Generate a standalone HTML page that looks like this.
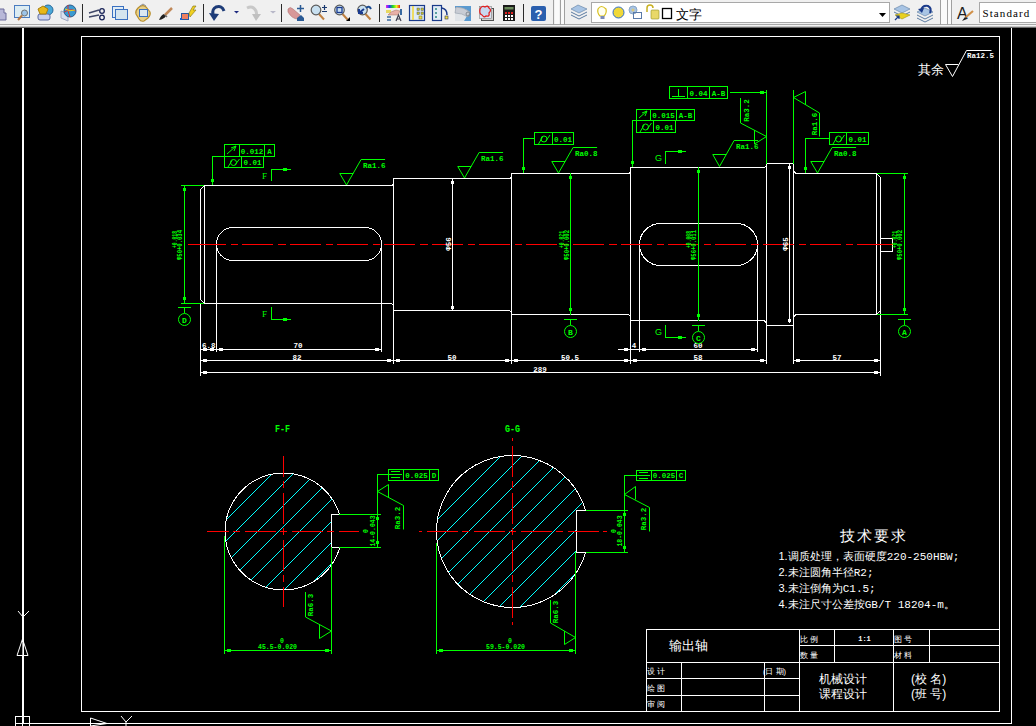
<!DOCTYPE html>
<html><head><meta charset="utf-8"><style>
html,body{margin:0;padding:0;background:#000;width:1036px;height:726px;overflow:hidden}
svg{position:absolute;left:0;top:0}

</style></head><body>
<svg width="1036" height="726" viewBox="0 0 1036 726" shape-rendering="crispEdges">
<defs><linearGradient id="rainbow"><stop offset="0" stop-color="#f020f0"/><stop offset="0.25" stop-color="#2040f0"/><stop offset="0.5" stop-color="#20e020"/><stop offset="0.75" stop-color="#f0f020"/><stop offset="1" stop-color="#f02020"/></linearGradient></defs>
<rect x="0" y="0" width="1036" height="726" fill="#000"/>
<g stroke-width="1" fill="none">
<path d="M22.5 28V724" stroke="#ffffff"/>
<path d="M23.5 28V724" stroke="#ffffff"/>
<path d="M23 723.5H1012" stroke="#ffffff"/>
<path d="M1011.5 28V724" stroke="#ffffff"/>
<rect x="81.5" y="36.5" width="918" height="675" fill="none" stroke="#ffffff"/>
<path d="M204.5 185.5 L200.5 189.5 V299.5 L204.5 303.5" stroke="#ffffff" fill="none"/>
<path d="M204.5 185V304" stroke="#ffffff"/>
<path d="M204.5 185.5 H390.5 Q393.5 185.5 393.5 182.5" stroke="#ffffff" fill="none"/>
<path d="M204.5 303.5 H390.5 Q393.5 303.5 393.5 306.5" stroke="#ffffff" fill="none"/>
<path d="M393.5 178V311" stroke="#ffffff"/>
<path d="M393.5 178.5 H508.5 Q511.5 178.5 511.5 175.5" stroke="#ffffff" fill="none"/>
<path d="M393.5 310.5 H508.5 Q511.5 310.5 511.5 313.5" stroke="#ffffff" fill="none"/>
<path d="M511.5 173V315" stroke="#ffffff"/>
<path d="M511.5 173.5 H627.5 Q630.5 173.5 630.5 170.5" stroke="#ffffff" fill="none"/>
<path d="M511.5 314.5 H627.5 Q630.5 314.5 630.5 317.5" stroke="#ffffff" fill="none"/>
<path d="M630.5 167V321" stroke="#ffffff"/>
<path d="M630.5 167.5 H762.5 Q766.5 167.5 766.5 163.5" stroke="#ffffff" fill="none"/>
<path d="M630.5 320.5 H762.5 Q766.5 320.5 766.5 324.5" stroke="#ffffff" fill="none"/>
<path d="M766.5 163V326" stroke="#ffffff"/>
<path d="M766 163.5H794" stroke="#ffffff"/>
<path d="M766 325.5H794" stroke="#ffffff"/>
<path d="M793.5 163V326" stroke="#ffffff"/>
<path d="M793.5 168.5 Q793.5 173.5 797.5 173.5 H876.5 L880.5 177.5 V310.5 L876.5 314.5 H797.5 Q793.5 314.5 793.5 319.5" stroke="#ffffff" fill="none"/>
<path d="M876.5 173V315" stroke="#ffffff"/>
<path d="M880.5 238.5 H892.5 V251.5 H880.5" stroke="#ffffff" fill="none"/>
<rect x="216.5" y="227.5" width="165" height="33" rx="16.5" fill="none" stroke="#fff"/>
<rect x="639.5" y="223.5" width="118" height="42" rx="21" fill="none" stroke="#fff"/>
<path d="M188 244.5H226M857 244.5H893" stroke="#ff0000"/>
<path d="M226 244.5H857" stroke="#ff0000" stroke-dasharray="31 5 7.3 4" stroke-dashoffset="31"/>
<path d="M200.5 303V376" stroke="#ffffff"/>
<path d="M216.5 245V352" stroke="#ffffff"/>
<path d="M381.5 245V352" stroke="#ffffff"/>
<path d="M393.5 310V364" stroke="#ffffff"/>
<path d="M511.5 314V364" stroke="#ffffff"/>
<path d="M630.5 320V364" stroke="#ffffff"/>
<path d="M639.5 245V352" stroke="#ffffff"/>
<path d="M757.5 245V352" stroke="#ffffff"/>
<path d="M766.5 325V364" stroke="#ffffff"/>
<path d="M793.5 325V364" stroke="#ffffff"/>
<path d="M880.5 310V376" stroke="#ffffff"/>
<path d="M200 349.5H382" stroke="#ffffff"/>
<rect x="203" y="348" width="4" height="3" fill="#ffffff"/>
<rect x="210" y="348" width="4" height="3" fill="#ffffff"/>
<rect x="219" y="348" width="4" height="3" fill="#ffffff"/>
<rect x="375" y="348" width="4" height="3" fill="#ffffff"/>
<path d="M618 349.5H758" stroke="#ffffff"/>
<rect x="624" y="348" width="4" height="3" fill="#ffffff"/>
<rect x="642" y="348" width="4" height="3" fill="#ffffff"/>
<rect x="751" y="348" width="4" height="3" fill="#ffffff"/>
<path d="M200 360.5H767" stroke="#ffffff"/>
<rect x="203" y="359" width="4" height="3" fill="#ffffff"/>
<rect x="387" y="359" width="4" height="3" fill="#ffffff"/>
<rect x="396" y="359" width="4" height="3" fill="#ffffff"/>
<rect x="505" y="359" width="4" height="3" fill="#ffffff"/>
<rect x="514" y="359" width="4" height="3" fill="#ffffff"/>
<rect x="624" y="359" width="4" height="3" fill="#ffffff"/>
<rect x="633" y="359" width="4" height="3" fill="#ffffff"/>
<rect x="760" y="359" width="4" height="3" fill="#ffffff"/>
<path d="M793 360.5H881" stroke="#ffffff"/>
<rect x="796" y="359" width="4" height="3" fill="#ffffff"/>
<rect x="874" y="359" width="4" height="3" fill="#ffffff"/>
<path d="M200 372.5H881" stroke="#ffffff"/>
<rect x="203" y="371" width="4" height="3" fill="#ffffff"/>
<rect x="874" y="371" width="4" height="3" fill="#ffffff"/>
<text x="202" y="348" fill="#ffffff" font-size="7.5" text-anchor="start" font-family="Liberation Mono, sans-serif"  font-weight="bold">6.8</text>
<text x="298" y="348" fill="#ffffff" font-size="7.5" text-anchor="middle" font-family="Liberation Mono, sans-serif"  font-weight="bold">70</text>
<text x="297" y="360" fill="#ffffff" font-size="7.5" text-anchor="middle" font-family="Liberation Mono, sans-serif"  font-weight="bold">82</text>
<text x="452" y="360" fill="#ffffff" font-size="7.5" text-anchor="middle" font-family="Liberation Mono, sans-serif"  font-weight="bold">50</text>
<text x="570" y="360" fill="#ffffff" font-size="7.5" text-anchor="middle" font-family="Liberation Mono, sans-serif"  font-weight="bold">50.5</text>
<text x="634" y="348" fill="#ffffff" font-size="7.5" text-anchor="middle" font-family="Liberation Mono, sans-serif"  font-weight="bold">4</text>
<text x="698" y="348" fill="#ffffff" font-size="7.5" text-anchor="middle" font-family="Liberation Mono, sans-serif"  font-weight="bold">60</text>
<text x="698" y="360" fill="#ffffff" font-size="7.5" text-anchor="middle" font-family="Liberation Mono, sans-serif"  font-weight="bold">58</text>
<text x="837" y="360" fill="#ffffff" font-size="7.5" text-anchor="middle" font-family="Liberation Mono, sans-serif"  font-weight="bold">57</text>
<text x="540" y="372" fill="#ffffff" font-size="7.5" text-anchor="middle" font-family="Liberation Mono, sans-serif"  font-weight="bold">289</text>
<path d="M452.5 178V311" stroke="#ffffff"/>
<rect x="451" y="181" width="3" height="3" fill="#ffffff"/>
<rect x="451" y="306" width="3" height="3" fill="#ffffff"/>
<text x="451" y="244" fill="#ffffff" font-size="7.5" text-anchor="middle" font-family="Liberation Mono, sans-serif" transform="rotate(-90 451 244)"  font-weight="bold">&#934;56</text>
<path d="M789.5 163V323" stroke="#ffffff"/>
<rect x="788" y="166" width="3" height="3" fill="#ffffff"/>
<rect x="788" y="319" width="3" height="3" fill="#ffffff"/>
<text x="788" y="244" fill="#ffffff" font-size="7.5" text-anchor="middle" font-family="Liberation Mono, sans-serif" transform="rotate(-90 788 244)"  font-weight="bold">&#934;65</text>
<path d="M184.5 185V304" stroke="#00ff00"/>
<rect x="183" y="188" width="3" height="3" fill="#00ff00"/>
<rect x="183" y="297" width="3" height="3" fill="#00ff00"/>
<path d="M181 185.5H204" stroke="#00ff00"/>
<path d="M181 303.5H204" stroke="#00ff00"/>
<path d="M570.5 173V315" stroke="#00ff00"/>
<rect x="569" y="176" width="3" height="3" fill="#00ff00"/>
<rect x="569" y="308" width="3" height="3" fill="#00ff00"/>
<path d="M698.5 167V321" stroke="#00ff00"/>
<rect x="697" y="170" width="3" height="3" fill="#00ff00"/>
<rect x="697" y="314" width="3" height="3" fill="#00ff00"/>
<path d="M904.5 173V315" stroke="#00ff00"/>
<rect x="903" y="176" width="3" height="3" fill="#00ff00"/>
<rect x="903" y="308" width="3" height="3" fill="#00ff00"/>
<path d="M877 173.5H908" stroke="#00ff00"/>
<path d="M877 314.5H908" stroke="#00ff00"/>
<text x="177" y="248" fill="#00ff00" font-size="6.5" text-anchor="start" font-family="Liberation Mono, sans-serif" transform="rotate(-90 177 248)" textLength="17" lengthAdjust="spacingAndGlyphs" font-weight="bold">+0.018</text>
<text x="182" y="260" fill="#00ff00" font-size="6.5" text-anchor="start" font-family="Liberation Mono, sans-serif" transform="rotate(-90 182 260)" textLength="30" lengthAdjust="spacingAndGlyphs" font-weight="bold">&#934;50+0.034</text>
<text x="564" y="248" fill="#00ff00" font-size="6.5" text-anchor="start" font-family="Liberation Mono, sans-serif" transform="rotate(-90 564 248)" textLength="17" lengthAdjust="spacingAndGlyphs" font-weight="bold">+0.021</text>
<text x="569" y="260" fill="#00ff00" font-size="6.5" text-anchor="start" font-family="Liberation Mono, sans-serif" transform="rotate(-90 569 260)" textLength="30" lengthAdjust="spacingAndGlyphs" font-weight="bold">&#934;50+0.002</text>
<text x="691" y="248" fill="#00ff00" font-size="6.5" text-anchor="start" font-family="Liberation Mono, sans-serif" transform="rotate(-90 691 248)" textLength="17" lengthAdjust="spacingAndGlyphs" font-weight="bold">+0.008</text>
<text x="696" y="260" fill="#00ff00" font-size="6.5" text-anchor="start" font-family="Liberation Mono, sans-serif" transform="rotate(-90 696 260)" textLength="30" lengthAdjust="spacingAndGlyphs" font-weight="bold">&#934;56+0.011</text>
<text x="897" y="248" fill="#00ff00" font-size="6.5" text-anchor="start" font-family="Liberation Mono, sans-serif" transform="rotate(-90 897 248)" textLength="17" lengthAdjust="spacingAndGlyphs" font-weight="bold">+0.021</text>
<text x="902" y="260" fill="#00ff00" font-size="6.5" text-anchor="start" font-family="Liberation Mono, sans-serif" transform="rotate(-90 902 260)" textLength="30" lengthAdjust="spacingAndGlyphs" font-weight="bold">&#934;50+0.002</text>
<path d="M178 307.5H191" stroke="#00ff00"/>
<path d="M184.5 307V313" stroke="#00ff00"/>
<circle cx="184.5" cy="319.5" r="6" stroke="#00ff00" fill="none" shape-rendering="auto"/>
<text x="184.5" y="322.5" fill="#00ff00" font-size="8" text-anchor="middle" font-family="Liberation Mono, sans-serif"  font-weight="bold">D</text>
<path d="M564 319.5H577" stroke="#00ff00"/>
<path d="M570.5 319V325" stroke="#00ff00"/>
<circle cx="570.5" cy="331.5" r="6" stroke="#00ff00" fill="none" shape-rendering="auto"/>
<text x="570.5" y="334.5" fill="#00ff00" font-size="8" text-anchor="middle" font-family="Liberation Mono, sans-serif"  font-weight="bold">B</text>
<path d="M692 325.5H705" stroke="#00ff00"/>
<path d="M698.5 325V331" stroke="#00ff00"/>
<circle cx="698.5" cy="337.5" r="6" stroke="#00ff00" fill="none" shape-rendering="auto"/>
<text x="698.5" y="340.5" fill="#00ff00" font-size="8" text-anchor="middle" font-family="Liberation Mono, sans-serif"  font-weight="bold">C</text>
<path d="M898 319.5H911" stroke="#00ff00"/>
<path d="M904.5 319V325" stroke="#00ff00"/>
<circle cx="904.5" cy="331.5" r="6" stroke="#00ff00" fill="none" shape-rendering="auto"/>
<text x="904.5" y="334.5" fill="#00ff00" font-size="8" text-anchor="middle" font-family="Liberation Mono, sans-serif"  font-weight="bold">A</text>
<path d="M224 144.5H275" stroke="#00ff00"/>
<path d="M224 156.5H275" stroke="#00ff00"/>
<path d="M224.5 144V157" stroke="#00ff00"/>
<path d="M274.5 144V157" stroke="#00ff00"/>
<path d="M239.5 144V157" stroke="#00ff00"/>
<path d="M264.5 144V157" stroke="#00ff00"/>
<path d="M224 156.5H264" stroke="#00ff00"/>
<path d="M224 167.5H264" stroke="#00ff00"/>
<path d="M224.5 156V168" stroke="#00ff00"/>
<path d="M263.5 156V168" stroke="#00ff00"/>
<path d="M241.5 156V168" stroke="#00ff00"/>
<path d="M227 154L236 146" stroke="#00ff00" shape-rendering="auto"/>
<path d="M231 148L236 146L234 151" stroke="#00ff00" fill="none" shape-rendering="auto"/>
<text x="252.0" y="154" fill="#00ff00" font-size="7.5" text-anchor="middle" font-family="Liberation Mono, sans-serif"  font-weight="bold">0.012</text>
<text x="269.5" y="154" fill="#00ff00" font-size="7.5" text-anchor="middle" font-family="Liberation Mono, sans-serif"  font-weight="bold">A</text>
<circle cx="233.5" cy="162.5" r="3" stroke="#00ff00" fill="none" shape-rendering="auto"/>
<path d="M228.0 167L232.0 160.5M235.0 165.0L239.5 159" stroke="#00ff00" shape-rendering="auto"/>
<text x="252.5" y="165" fill="#00ff00" font-size="7.5" text-anchor="middle" font-family="Liberation Mono, sans-serif"  font-weight="bold">0.01</text>
<path d="M212 156.5H225" stroke="#00ff00"/>
<path d="M212.5 156V185" stroke="#00ff00"/>
<rect x="211" y="179" width="3" height="3" fill="#00ff00"/>
<path d="M534 132.5H574" stroke="#00ff00"/>
<path d="M534 144.5H574" stroke="#00ff00"/>
<path d="M534.5 132V145" stroke="#00ff00"/>
<path d="M573.5 132V145" stroke="#00ff00"/>
<path d="M552.5 132V145" stroke="#00ff00"/>
<circle cx="544.0" cy="139.0" r="3" stroke="#00ff00" fill="none" shape-rendering="auto"/>
<path d="M538.5 144L542.5 137.0M545.5 141.5L550.0 135" stroke="#00ff00" shape-rendering="auto"/>
<text x="563.0" y="142" fill="#00ff00" font-size="7.5" text-anchor="middle" font-family="Liberation Mono, sans-serif"  font-weight="bold">0.01</text>
<path d="M523 138.5H535" stroke="#00ff00"/>
<path d="M523.5 138V173" stroke="#00ff00"/>
<rect x="522" y="167" width="3" height="3" fill="#00ff00"/>
<path d="M669 86.5H728" stroke="#00ff00"/>
<path d="M669 98.5H728" stroke="#00ff00"/>
<path d="M669.5 86V99" stroke="#00ff00"/>
<path d="M727.5 86V99" stroke="#00ff00"/>
<path d="M687.5 86V99" stroke="#00ff00"/>
<path d="M709.5 86V99" stroke="#00ff00"/>
<path d="M672 96.5H685" stroke="#00ff00"/>
<path d="M678.5 89V97" stroke="#00ff00"/>
<text x="698.5" y="96" fill="#00ff00" font-size="7.5" text-anchor="middle" font-family="Liberation Mono, sans-serif"  font-weight="bold">0.04</text>
<text x="718.5" y="96" fill="#00ff00" font-size="7.5" text-anchor="middle" font-family="Liberation Mono, sans-serif"  font-weight="bold">A-B</text>
<path d="M730 92.5H767" stroke="#00ff00"/>
<rect x="760" y="91" width="4" height="3" fill="#00ff00"/>
<path d="M636 109.5H695" stroke="#00ff00"/>
<path d="M636 120.5H695" stroke="#00ff00"/>
<path d="M636.5 109V121" stroke="#00ff00"/>
<path d="M694.5 109V121" stroke="#00ff00"/>
<path d="M650.5 109V121" stroke="#00ff00"/>
<path d="M676.5 109V121" stroke="#00ff00"/>
<path d="M636 120.5H676" stroke="#00ff00"/>
<path d="M636 132.5H676" stroke="#00ff00"/>
<path d="M636.5 120V133" stroke="#00ff00"/>
<path d="M675.5 120V133" stroke="#00ff00"/>
<path d="M653.5 120V133" stroke="#00ff00"/>
<path d="M639 118L647 111" stroke="#00ff00" shape-rendering="auto"/>
<path d="M642 113L647 111L645 116" stroke="#00ff00" fill="none" shape-rendering="auto"/>
<text x="663.5" y="118" fill="#00ff00" font-size="7.5" text-anchor="middle" font-family="Liberation Mono, sans-serif"  font-weight="bold">0.015</text>
<text x="685.5" y="118" fill="#00ff00" font-size="7.5" text-anchor="middle" font-family="Liberation Mono, sans-serif"  font-weight="bold">A-B</text>
<circle cx="645.5" cy="127.0" r="3" stroke="#00ff00" fill="none" shape-rendering="auto"/>
<path d="M640.0 132L644.0 125.0M647.0 129.5L651.5 123" stroke="#00ff00" shape-rendering="auto"/>
<text x="664.5" y="130" fill="#00ff00" font-size="7.5" text-anchor="middle" font-family="Liberation Mono, sans-serif"  font-weight="bold">0.01</text>
<path d="M632 120.5H637" stroke="#00ff00"/>
<path d="M632.5 120V167" stroke="#00ff00"/>
<rect x="631" y="161" width="3" height="3" fill="#00ff00"/>
<path d="M829 132.5H869" stroke="#00ff00"/>
<path d="M829 144.5H869" stroke="#00ff00"/>
<path d="M829.5 132V145" stroke="#00ff00"/>
<path d="M868.5 132V145" stroke="#00ff00"/>
<path d="M846.5 132V145" stroke="#00ff00"/>
<circle cx="838.5" cy="139.0" r="3" stroke="#00ff00" fill="none" shape-rendering="auto"/>
<path d="M833.0 144L837.0 137.0M840.0 141.5L844.5 135" stroke="#00ff00" shape-rendering="auto"/>
<text x="857.5" y="142" fill="#00ff00" font-size="7.5" text-anchor="middle" font-family="Liberation Mono, sans-serif"  font-weight="bold">0.01</text>
<path d="M805 138.5H830" stroke="#00ff00"/>
<path d="M805.5 138V173" stroke="#00ff00"/>
<rect x="804" y="167" width="3" height="3" fill="#00ff00"/>
<path d="M766.5 90V164" stroke="#00ff00"/>
<path d="M793.5 90V164" stroke="#00ff00"/>
<path d="M339.75 173.5H353.25M339.75 173.5L346.5 185L361.09 159.5H385.09" stroke="#00ff00" fill="none" shape-rendering="auto"/>
<text x="363.09" y="168.0" fill="#00ff00" font-size="7.5" text-anchor="start" font-family="Liberation Mono, sans-serif"  font-weight="bold">Ra1.6</text>
<path d="M457.75 166.5H471.25M457.75 166.5L464.5 178L479.09 152.5H503.09" stroke="#00ff00" fill="none" shape-rendering="auto"/>
<text x="481.09" y="161.0" fill="#00ff00" font-size="7.5" text-anchor="start" font-family="Liberation Mono, sans-serif"  font-weight="bold">Ra1.6</text>
<path d="M551.75 161.5H565.25M551.75 161.5L558.5 173L573.09 147.5H597.09" stroke="#00ff00" fill="none" shape-rendering="auto"/>
<text x="575.09" y="156.0" fill="#00ff00" font-size="7.5" text-anchor="start" font-family="Liberation Mono, sans-serif"  font-weight="bold">Ra0.8</text>
<path d="M712.75 154.5H726.25M712.75 154.5L719.5 166.5L734.09 140.5H758.09" stroke="#00ff00" fill="none" shape-rendering="auto"/>
<text x="736.09" y="149.0" fill="#00ff00" font-size="7.5" text-anchor="start" font-family="Liberation Mono, sans-serif"  font-weight="bold">Ra1.6</text>
<path d="M810.75 161.5H824.25M810.75 161.5L817.5 173L832.09 147.5H856.09" stroke="#00ff00" fill="none" shape-rendering="auto"/>
<text x="834.09" y="156.0" fill="#00ff00" font-size="7.5" text-anchor="start" font-family="Liberation Mono, sans-serif"  font-weight="bold">Ra0.8</text>
<path d="M740.5 98L740.5 123L766.5 136.5" stroke="#00ff00" fill="none" shape-rendering="auto"/>
<path d="M754.5 130L754.5 144L766.5 136.5" stroke="#00ff00" fill="none" shape-rendering="auto"/>
<text x="749" y="110.5" fill="#00ff00" font-size="7.5" text-anchor="middle" font-family="Liberation Mono, sans-serif" transform="rotate(-90 749 110.5)"  font-weight="bold">Ra3.2</text>
<path d="M805.5 91.5L793.5 97.5L819.5 113L819.5 136.5" stroke="#00ff00" fill="none" shape-rendering="auto"/>
<path d="M805.5 91.5L805.5 105" stroke="#00ff00" fill="none" shape-rendering="auto"/>
<text x="817" y="124" fill="#00ff00" font-size="7.5" text-anchor="middle" font-family="Liberation Mono, sans-serif" transform="rotate(-90 817 124)"  font-weight="bold">Ra1.6</text>
<path d="M271.5 169V181" stroke="#00ff00"/>
<path d="M271 169.5H291" stroke="#00ff00"/>
<rect x="283" y="168" width="4" height="3" fill="#00ff00"/>
<text x="264.5" y="178.5" fill="#00ff00" font-size="9" text-anchor="middle" font-family="Liberation Serif, sans-serif" >F</text>
<path d="M271.5 307V320" stroke="#00ff00"/>
<path d="M271 319.5H291" stroke="#00ff00"/>
<rect x="283" y="318" width="4" height="3" fill="#00ff00"/>
<text x="264.5" y="317" fill="#00ff00" font-size="9" text-anchor="middle" font-family="Liberation Serif, sans-serif" >F</text>
<path d="M665.5 151V164" stroke="#00ff00"/>
<path d="M665 151.5H686" stroke="#00ff00"/>
<rect x="678" y="150" width="4" height="3" fill="#00ff00"/>
<text x="658.5" y="161" fill="#00ff00" font-size="9" text-anchor="middle" font-family="Liberation Sans, sans-serif" >G</text>
<path d="M665.5 325V338" stroke="#00ff00"/>
<path d="M665 337.5H686" stroke="#00ff00"/>
<rect x="678" y="336" width="4" height="3" fill="#00ff00"/>
<text x="658.5" y="335" fill="#00ff00" font-size="9" text-anchor="middle" font-family="Liberation Sans, sans-serif" >G</text>
<text x="918" y="73.5" fill="#ffffff" font-size="12.5" text-anchor="start" font-family="Liberation Sans, sans-serif" >其余</text>
<path d="M945.5 64.5H958.5M945.5 64.5L952.5 76.5L966.5 50.5H991.5" stroke="#fff" fill="none" shape-rendering="auto"/>
<text x="967" y="58" fill="#ffffff" font-size="7.5" text-anchor="start" font-family="Liberation Mono, sans-serif"  font-weight="bold">Ra12.5</text>
<clipPath id="cf"><path d="M339.48 514.5 L331.5 514.5 L331.5 547.5 L339.77 547.5 A58.5 58.5 0 1 1 339.48 514.5 Z"/></clipPath>
<path d="M151.0 595.0L347.0 399.0M172.0 595.0L347.0 420.0M194.0 595.0L347.0 442.0M215.0 595.0L347.0 463.0M236.0 595.0L347.0 484.0M258.0 595.0L347.0 506.0M279.0 595.0L347.0 527.0M300.0 595.0L347.0 548.0" stroke="#00ffff" clip-path="url(#cf)"/>
<path d="M339.48 514.5 L331.5 514.5 L331.5 547.5 L339.77 547.5 A58.5 58.5 0 1 1 339.48 514.5 Z" stroke="#fff" fill="none"/>
<path d="M207 531.5H359" stroke="#ff0000" stroke-dasharray="31 4.5 7 4.5" stroke-dashoffset="9.5"/>
<path d="M283.5 456V607" stroke="#ff0000" stroke-dasharray="31 4.5 7 4.5" stroke-dashoffset="10.5"/>
<clipPath id="cg"><path d="M585.54 510.5 L576.5 510.5 L576.5 552.5 L585.54 552.5 A76 76 0 1 1 585.54 510.5 Z"/></clipPath>
<path d="M323.5 612.5L593.5 342.5M344.5 612.5L593.5 363.5M365.5 612.5L593.5 384.5M387.5 612.5L593.5 406.5M408.5 612.5L593.5 427.5M429.5 612.5L593.5 448.5M451.5 612.5L593.5 470.5M472.5 612.5L593.5 491.5M493.5 612.5L593.5 512.5M514.5 612.5L593.5 533.5M536.5 612.5L593.5 555.5" stroke="#00ffff" clip-path="url(#cg)"/>
<path d="M585.54 510.5 L576.5 510.5 L576.5 552.5 L585.54 552.5 A76 76 0 1 1 585.54 510.5 Z" stroke="#fff" fill="none"/>
<path d="M419 531.5H607" stroke="#ff0000" stroke-dasharray="31 4.5 7 4.5" stroke-dashoffset="39.5"/>
<path d="M512.5 438V625" stroke="#ff0000" stroke-dasharray="31 4.5 7 4.5" stroke-dashoffset="39.5"/>
<path d="M224.5 536V654" stroke="#00ff00"/>
<path d="M331.5 547V654" stroke="#00ff00"/>
<path d="M224 650.5H332" stroke="#00ff00"/>
<rect x="227" y="649" width="4" height="3" fill="#00ff00"/>
<rect x="325" y="649" width="4" height="3" fill="#00ff00"/>
<text x="277.5" y="649" fill="#00ff00" font-size="6.5" text-anchor="middle" font-family="Liberation Mono, sans-serif"  font-weight="bold">45.5-0.020</text>
<text x="282" y="643" fill="#00ff00" font-size="6.5" text-anchor="middle" font-family="Liberation Mono, sans-serif"  font-weight="bold">0</text>
<path d="M436.5 543V654" stroke="#00ff00"/>
<path d="M575.5 552V654" stroke="#00ff00"/>
<path d="M436 650.5H576" stroke="#00ff00"/>
<rect x="439" y="649" width="4" height="3" fill="#00ff00"/>
<rect x="569" y="649" width="4" height="3" fill="#00ff00"/>
<text x="505.5" y="649" fill="#00ff00" font-size="6.5" text-anchor="middle" font-family="Liberation Mono, sans-serif"  font-weight="bold">59.5-0.020</text>
<text x="510" y="643" fill="#00ff00" font-size="6.5" text-anchor="middle" font-family="Liberation Mono, sans-serif"  font-weight="bold">0</text>
<path d="M339 514.5H381" stroke="#00ff00"/>
<path d="M339 547.5H381" stroke="#00ff00"/>
<path d="M377.5 474V548" stroke="#00ff00"/>
<rect x="376" y="517" width="3" height="3" fill="#00ff00"/>
<rect x="376" y="541" width="3" height="3" fill="#00ff00"/>
<text x="374.5" y="531" fill="#00ff00" font-size="6.5" text-anchor="middle" font-family="Liberation Mono, sans-serif" transform="rotate(-90 374.5 531)"  font-weight="bold">14-0.043</text>
<text x="368" y="531" fill="#00ff00" font-size="6.5" text-anchor="middle" font-family="Liberation Mono, sans-serif" transform="rotate(-90 368 531)"  font-weight="bold">0</text>
<path d="M586 510.5H628" stroke="#00ff00"/>
<path d="M586 552.5H628" stroke="#00ff00"/>
<path d="M624.5 475V553" stroke="#00ff00"/>
<rect x="623" y="513" width="3" height="3" fill="#00ff00"/>
<rect x="623" y="546" width="3" height="3" fill="#00ff00"/>
<text x="622" y="531" fill="#00ff00" font-size="6.5" text-anchor="middle" font-family="Liberation Mono, sans-serif" transform="rotate(-90 622 531)"  font-weight="bold">18-0.043</text>
<text x="615.5" y="531" fill="#00ff00" font-size="6.5" text-anchor="middle" font-family="Liberation Mono, sans-serif" transform="rotate(-90 615.5 531)"  font-weight="bold">0</text>
<path d="M388 469.5H439" stroke="#00ff00"/>
<path d="M388 480.5H439" stroke="#00ff00"/>
<path d="M388.5 469V481" stroke="#00ff00"/>
<path d="M438.5 469V481" stroke="#00ff00"/>
<path d="M403.5 469V481" stroke="#00ff00"/>
<path d="M429.5 469V481" stroke="#00ff00"/>
<path d="M391 471.5H400" stroke="#00ff00"/>
<path d="M389 474.5H402" stroke="#00ff00"/>
<path d="M391 477.5H400" stroke="#00ff00"/>
<text x="416.5" y="478" fill="#00ff00" font-size="7.5" text-anchor="middle" font-family="Liberation Mono, sans-serif"  font-weight="bold">0.025</text>
<text x="434.0" y="478" fill="#00ff00" font-size="7.5" text-anchor="middle" font-family="Liberation Mono, sans-serif"  font-weight="bold">D</text>
<path d="M377 474.5H389" stroke="#00ff00"/>
<path d="M636 470.5H686" stroke="#00ff00"/>
<path d="M636 480.5H686" stroke="#00ff00"/>
<path d="M636.5 470V481" stroke="#00ff00"/>
<path d="M685.5 470V481" stroke="#00ff00"/>
<path d="M651.5 470V481" stroke="#00ff00"/>
<path d="M676.5 470V481" stroke="#00ff00"/>
<path d="M639 472.5H648" stroke="#00ff00"/>
<path d="M637 475.5H650" stroke="#00ff00"/>
<path d="M639 478.5H648" stroke="#00ff00"/>
<text x="664.0" y="478" fill="#00ff00" font-size="7.5" text-anchor="middle" font-family="Liberation Mono, sans-serif"  font-weight="bold">0.025</text>
<text x="681.0" y="478" fill="#00ff00" font-size="7.5" text-anchor="middle" font-family="Liberation Mono, sans-serif"  font-weight="bold">C</text>
<path d="M624 475.5H637" stroke="#00ff00"/>
<path d="M388.5 484.5L377.5 491.5L403.5 505.5L403.5 529.5" stroke="#00ff00" fill="none" shape-rendering="auto"/>
<path d="M388.5 484.5L388.5 497.5" stroke="#00ff00" fill="none" shape-rendering="auto"/>
<text x="400" y="518" fill="#00ff00" font-size="7.5" text-anchor="middle" font-family="Liberation Mono, sans-serif" transform="rotate(-90 400 518)"  font-weight="bold">Ra3.2</text>
<path d="M305.5 592L305.5 617L331.5 631" stroke="#00ff00" fill="none" shape-rendering="auto"/>
<path d="M319.5 625L319.5 638.5L331.5 631" stroke="#00ff00" fill="none" shape-rendering="auto"/>
<text x="313" y="605" fill="#00ff00" font-size="7.5" text-anchor="middle" font-family="Liberation Mono, sans-serif" transform="rotate(-90 313 605)"  font-weight="bold">Ra6.3</text>
<path d="M635.5 486.5L624.5 494.5L649.5 507.5L649.5 531.5" stroke="#00ff00" fill="none" shape-rendering="auto"/>
<path d="M635.5 486.5L635.5 499.5" stroke="#00ff00" fill="none" shape-rendering="auto"/>
<text x="646" y="519" fill="#00ff00" font-size="7.5" text-anchor="middle" font-family="Liberation Mono, sans-serif" transform="rotate(-90 646 519)"  font-weight="bold">Ra3.2</text>
<path d="M550.5 600L550.5 623L575.5 637.5" stroke="#00ff00" fill="none" shape-rendering="auto"/>
<path d="M564.5 631L564.5 644.5L575.5 637.5" stroke="#00ff00" fill="none" shape-rendering="auto"/>
<text x="557.5" y="612" fill="#00ff00" font-size="7.5" text-anchor="middle" font-family="Liberation Mono, sans-serif" transform="rotate(-90 557.5 612)"  font-weight="bold">Ra6.3</text>
<text x="275" y="432" fill="#00ff00" font-size="10" text-anchor="start" font-family="Liberation Mono, sans-serif" textLength="15" lengthAdjust="spacingAndGlyphs" font-weight="bold">F-F</text>
<text x="505" y="432" fill="#00ff00" font-size="10" text-anchor="start" font-family="Liberation Mono, sans-serif" textLength="15" lengthAdjust="spacingAndGlyphs" font-weight="bold">G-G</text>
<path d="M646 629.5H1000" stroke="#ffffff"/>
<path d="M646.5 629V712" stroke="#ffffff"/>
<path d="M799.5 629V712" stroke="#ffffff"/>
<path d="M646 662.5H1000" stroke="#ffffff"/>
<path d="M646 678.5H800" stroke="#ffffff"/>
<path d="M646 695.5H800" stroke="#ffffff"/>
<path d="M681.5 662V712" stroke="#ffffff"/>
<path d="M764.5 662V712" stroke="#ffffff"/>
<path d="M799 645.5H1000" stroke="#ffffff"/>
<path d="M834.5 629V663" stroke="#ffffff"/>
<path d="M929.5 629V663" stroke="#ffffff"/>
<path d="M893.5 629V712" stroke="#ffffff"/>
<text x="669" y="649.5" fill="#ffffff" font-size="12.5" text-anchor="start" font-family="Liberation Sans, sans-serif" >输出轴</text>
<text x="647" y="674" fill="#ffffff" font-size="7.5" text-anchor="start" font-family="Liberation Sans, sans-serif" >设 计</text>
<text x="647" y="690.5" fill="#ffffff" font-size="7.5" text-anchor="start" font-family="Liberation Sans, sans-serif" >绘 图</text>
<text x="647" y="707" fill="#ffffff" font-size="7.5" text-anchor="start" font-family="Liberation Sans, sans-serif" >审 阅</text>
<text x="763" y="674" fill="#ffffff" font-size="7.5" text-anchor="start" font-family="Liberation Sans, sans-serif" >(日 期)</text>
<text x="800" y="641.5" fill="#ffffff" font-size="7.5" text-anchor="start" font-family="Liberation Sans, sans-serif" >比 例</text>
<text x="800" y="658" fill="#ffffff" font-size="7.5" text-anchor="start" font-family="Liberation Sans, sans-serif" >数 量</text>
<text x="894" y="641.5" fill="#ffffff" font-size="7.5" text-anchor="start" font-family="Liberation Sans, sans-serif" >图 号</text>
<text x="894" y="658" fill="#ffffff" font-size="7.5" text-anchor="start" font-family="Liberation Sans, sans-serif" >材 料</text>
<text x="864.5" y="641" fill="#ffffff" font-size="7" text-anchor="middle" font-family="Liberation Mono, sans-serif"  font-weight="bold">1:1</text>
<text x="818.5" y="683" fill="#ffffff" font-size="12" text-anchor="start" font-family="Liberation Sans, sans-serif" >机械设计</text>
<text x="818.5" y="697.5" fill="#ffffff" font-size="12" text-anchor="start" font-family="Liberation Sans, sans-serif" >课程设计</text>
<text x="911" y="683" fill="#ffffff" font-size="12" text-anchor="start" font-family="Liberation Sans, sans-serif" >(校 名)</text>
<text x="911" y="697.5" fill="#ffffff" font-size="12" text-anchor="start" font-family="Liberation Sans, sans-serif" >(班 号)</text>
<text x="839.5" y="540.5" fill="#ffffff" font-size="15" text-anchor="start" font-family="Liberation Sans, sans-serif" letter-spacing="2">技术要求</text>
<text x="778.5" y="559.5" fill="#ffffff" font-size="11" text-anchor="start" font-family="Liberation Sans, sans-serif" >1.调质处理，表面硬度<tspan font-family="Liberation Mono">220-250HBW;</tspan></text>
<text x="778.5" y="575.5" fill="#ffffff" font-size="11" text-anchor="start" font-family="Liberation Sans, sans-serif" >2.未注圆角半径<tspan font-family="Liberation Mono">R2;</tspan></text>
<text x="778.5" y="591.5" fill="#ffffff" font-size="11" text-anchor="start" font-family="Liberation Sans, sans-serif" >3.未注倒角为<tspan font-family="Liberation Mono">C1.5;</tspan></text>
<text x="778.5" y="607.5" fill="#ffffff" font-size="11" text-anchor="start" font-family="Liberation Sans, sans-serif" >4.未注尺寸公差按<tspan font-family="Liberation Mono">GB/T 18204-m</tspan>。</text>
<path d="M15 716.5H30" stroke="#ffffff"/>
<path d="M15.5 716V727" stroke="#ffffff"/>
<path d="M29.5 716V727" stroke="#ffffff"/>
<path d="M15 723.5H24" stroke="#ffffff"/>
<path d="M22.5 723V727" stroke="#ffffff"/>
<path d="M17 655.5H28L22.5 639Z" stroke="#fff" fill="none" shape-rendering="auto"/><path d="M22.5 642V655" stroke="#aaa"/>
<path d="M18 611l5 6 6-6M23 617v11" stroke="#fff" fill="none" shape-rendering="auto"/>
<path d="M90.5 718V726M90.5 718L107 723.5L90.5 726" stroke="#fff" fill="none" shape-rendering="auto"/>
<path d="M121 716l5 6 6-6M126 722v4" stroke="#fff" fill="none" shape-rendering="auto"/>
</g>
<g shape-rendering="auto"><rect x="0" y="0" width="1036" height="24" fill="#f0f0f0"/>
<rect x="0" y="24" width="1036" height="1" fill="#a9a9a9"/>
<rect x="0" y="25" width="1036" height="1" fill="#f4f4f4"/>
<rect x="0" y="26" width="1036" height="1" fill="#c4c4c4"/>
<rect x="0" y="27" width="1036" height="1" fill="#6a6a6a"/>
<rect x="82" y="4" width="1" height="18" fill="#2a2a2a"/>
<rect x="203" y="4" width="1" height="18" fill="#2a2a2a"/>
<rect x="281" y="4" width="1" height="18" fill="#2a2a2a"/>
<rect x="379" y="4" width="1" height="18" fill="#2a2a2a"/>
<rect x="523" y="4" width="1" height="18" fill="#2a2a2a"/>
<rect x="553" y="0" width="1" height="25" fill="#a0a0a0"/>
<rect x="560" y="0" width="1" height="25" fill="#a0a0a0"/>
<rect x="564" y="0" width="1" height="25" fill="#a0a0a0"/>
<rect x="940" y="0" width="1" height="25" fill="#a0a0a0"/>
<rect x="947" y="0" width="1" height="25" fill="#a0a0a0"/>
<rect x="951" y="0" width="1" height="25" fill="#a0a0a0"/>
<rect x="555" y="0" width="4" height="24" fill="#fafafa"/><rect x="561" y="0" width="3" height="24" fill="#fafafa"/>
<rect x="941" y="0" width="6" height="24" fill="#fafafa"/><rect x="948" y="0" width="3" height="24" fill="#fafafa"/>
<path d="M-4 9h8v4h2v7h-10z" fill="#b8b8d8" stroke="#6a6a9a"/>
<rect x="14.5" y="5.5" width="15" height="12" fill="#dcecf2" stroke="#4a7cc0"/>
<circle cx="24.5" cy="13" r="3" fill="#9cc4e8" stroke="#707070"/><path d="M22 15.5L18 20" stroke="#b87840" stroke-width="2"/>
<circle cx="48" cy="10" r="5" fill="#4aa8d8" stroke="#2a6a9a"/><rect x="38" y="14" width="12" height="6" rx="2" fill="#c8d0f0" stroke="#5a6aa0"/>
<path d="M38 9l5-3 5 3-2 5h-6z" fill="#e8b818" stroke="#a88010"/>
<path d="M61 11l7 3v7l-7-3z" fill="#d8e0f0" stroke="#a0a8c0"/><circle cx="70" cy="11" r="6" fill="#3a9ad0" stroke="#2a5a8a"/><path d="M64.5 12q6 -4 11 -1M68 5q-1 6 2 12" stroke="#e03030" fill="none"/><path d="M65 9q5 3 10 1" stroke="#e8d020" fill="none"/>
<path d="M89 13l10 -3M89 17l10 -2" stroke="#404868" stroke-width="1.5"/><circle cx="102" cy="11" r="2.3" fill="none" stroke="#1a2458" stroke-width="1.3"/><circle cx="102" cy="17.5" r="2.3" fill="none" stroke="#1a2458" stroke-width="1.3"/>
<rect x="112.5" y="6.5" width="11" height="11" fill="#e0ecf4" stroke="#3a70c0"/><rect x="115.5" y="9.5" width="12" height="10" fill="#d4e4ee" stroke="#3a70c0"/>
<path d="M138 8q4-4 8-1l4 5q1 3-2 6l-4 3q-3 1-5-2l-3-5q-1-3 2-6z" fill="#e8d088" stroke="#b89030" stroke-width="1.2"/><path d="M140 6l3-2 3 2" stroke="#909090" fill="none"/><rect x="139.5" y="9.5" width="8" height="7" fill="#dbe8f2" stroke="#3a70c0"/>
<path d="M159 20q2-5 5-6l2 2q-2 3-7 4z" fill="#202020"/><path d="M165 15l7-7" stroke="#c08858" stroke-width="2.5"/><path d="M165 15l2 2" stroke="#707070" stroke-width="1.5"/>
<rect x="181.5" y="13.5" width="7" height="6" fill="#f08060" stroke="#2a5aa0"/><path d="M189 13l4-7h3l-3 4h3l-6 7z" fill="#f0d020" stroke="#807010" stroke-width="0.6"/><rect x="180" y="18" width="2" height="2" fill="#1a60d0"/>
<path d="M224 11q-2-6 -8-4q-4 2-3 7" stroke="#1e3c78" stroke-width="3" fill="none"/><path d="M209 13l5 8 5-7z" fill="#1e3c78"/>
<path d="M234 11h5l-2.5 2.5z" fill="#1e2a80"/>
<path d="M247 8q6-3 9 3q1 3 0 5" stroke="#c8c8c8" stroke-width="3" fill="none"/><path d="M252 14l4 7 5-7z" fill="#c0c0c0"/>
<path d="M270 11h6l-3 2.5z" fill="#b8b8c8"/>
<path d="M288 9q2-3 5 0l7 6-2 4q-6 0-10-7z" fill="#d89898" stroke="#b07070" stroke-width="0.6"/><path d="M297 18l4-3 3 3v3h-7z" fill="#2a5a94"/><path d="M300.5 5v7M297 8.5h7" stroke="#2a5a94" stroke-width="1.5"/>
<path d="M319 14L324 19.5" stroke="#c08040" stroke-width="2"/><circle cx="316" cy="10" r="4.8" fill="#c8e0f0" stroke="#5a5a5a" stroke-width="1.2"/>
<path d="M342.5 14L347.5 19.5" stroke="#c08040" stroke-width="2"/><circle cx="339.5" cy="10" r="4.8" fill="#c8e0f0" stroke="#5a5a5a" stroke-width="1.2"/>
<path d="M365.5 14L370.5 19.5" stroke="#c08040" stroke-width="2"/><circle cx="362.5" cy="10" r="4.8" fill="#c8e0f0" stroke="#5a5a5a" stroke-width="1.2"/>
<path d="M322 7.5h5M324.5 5v5M322 11.5h5" stroke="#1a3a70" stroke-width="1.2"/>
<rect x="337" y="7.5" width="5" height="5" fill="none" stroke="#1a3a90" stroke-width="1.3"/><path d="M346 21l4-4v4z" fill="#000"/>
<path d="M359 13l5-4M359 9v4h4" stroke="#1a3a90" stroke-width="2" fill="none"/><path d="M366 8q3-3 5 1" stroke="#1a4a90" stroke-width="2" fill="none"/>
<rect x="386" y="5" width="14" height="3" fill="url(#rainbow)"/><rect x="386" y="10" width="5" height="3" fill="#e8d860"/><path d="M388 15q3-4 8-5l4 1-2 4z" fill="#e8b0a8" stroke="#a07060" stroke-width="0.5"/><path d="M387 17h4M387 20h4" stroke="#3a6aa0" stroke-width="1.3"/><path d="M396 21l2.5-6 2.5 6M397 19h3" stroke="#404050" stroke-width="1.2" fill="none"/><rect x="400" y="9" width="2" height="6" fill="#3a6aa0"/>
<rect x="409.5" y="5.5" width="15" height="15" fill="#e0ecf4" stroke="#1a3a8a" stroke-width="1.2"/><rect x="412" y="6" width="2" height="14" fill="#f0d840" opacity="0.8"/>
<rect x="417" y="8" width="2.5" height="2.5" fill="#c8c020" stroke="#4a5a7a" stroke-width="0.5"/>
<rect x="421" y="8" width="2.5" height="2.5" fill="#c8c020" stroke="#4a5a7a" stroke-width="0.5"/>
<rect x="417" y="12" width="2.5" height="2.5" fill="#c8c020" stroke="#4a5a7a" stroke-width="0.5"/>
<rect x="421" y="12" width="2.5" height="2.5" fill="#c8c020" stroke="#4a5a7a" stroke-width="0.5"/>
<rect x="419" y="16" width="3" height="3" fill="#f0e040" stroke="#6a6a30" stroke-width="0.5"/>
<rect x="432.5" y="5.5" width="9" height="15" fill="#e0ecf4" stroke="#1a3a8a" stroke-width="1.2"/><rect x="435" y="8" width="2" height="2" fill="#5aa0a0"/><rect x="435" y="12" width="2" height="2" fill="#5aa0a0"/><rect x="435" y="16" width="2" height="2" fill="#5aa0a0"/><path d="M442 8q5 1 5 7" stroke="#1a3a8a" stroke-width="1.5" fill="none"/><rect x="445" y="16" width="3" height="3" fill="#f0e040" stroke="#303050" stroke-width="0.6"/>
<rect x="455" y="6" width="16" height="15" fill="#5a9ad0"/><path d="M455 8l12 8-3 5h-9z" fill="#e0e4e8"/><path d="M456 7q8 0 14 5l-2 5q-6-4-13-4z" fill="#c8ccd4" stroke="#909aa8" stroke-width="0.6"/><circle cx="468" cy="14" r="2" fill="none" stroke="#808890"/>
<rect x="481.5" y="8.5" width="12" height="12" fill="#d0d0d0" stroke="#505050"/><rect x="479.5" y="6.5" width="12" height="12" fill="#dce4f4" stroke="#808080" stroke-width="0.6"/><path d="M480 9q2-4 5-2q3-2 4 1q3 2 0 5q1 4-3 3q-2 2-4-1q-3-1-2-6z" fill="#c8d8f0" stroke="#e02020" stroke-width="1.3"/>
<rect x="503" y="5" width="12" height="16" fill="#1a1a1a"/><rect x="504.5" y="7" width="9" height="2.5" fill="#6a8a5a"/>
<rect x="505" y="12" width="2" height="2" fill="#e02020"/>
<rect x="508" y="12" width="2" height="2" fill="#e02020"/>
<rect x="511" y="12" width="2" height="2" fill="#e02020"/>
<rect x="505" y="15" width="2" height="2" fill="#fff"/>
<rect x="508" y="15" width="2" height="2" fill="#fff"/>
<rect x="511" y="15" width="2" height="2" fill="#fff"/>
<rect x="505" y="18" width="2" height="2" fill="#fff"/>
<rect x="508" y="18" width="2" height="2" fill="#fff"/>
<rect x="511" y="18" width="2" height="2" fill="#fff"/>
<rect x="531" y="6" width="15" height="15" rx="2" fill="#2a5fae"/><text x="538.5" y="18.5" font-size="13" font-weight="bold" fill="#fff" text-anchor="middle" font-family="Liberation Sans">?</text>
<path d="M571 9l7-4 9 4-8 4z" fill="#a8c4e4" stroke="#5a7aa0" stroke-width="0.6"/><path d="M571 12l8 4 8-4M571 15l8 4 8-4" stroke="#5a7aa0" stroke-width="1" fill="none"/>
<rect x="591.5" y="2.5" width="298" height="20" fill="#ffffff" stroke="#a8a8a8"/>
<path d="M600 16q-3-3-2-7q3-5 8 0q1 4-2 7z" fill="#fffff0" stroke="#d8c020" stroke-width="1.2"/><rect x="600.5" y="16" width="4" height="3" fill="#7a8ab8"/>
<circle cx="618.5" cy="12.5" r="5.5" fill="#f0d838" stroke="#2a6ad0" stroke-width="1"/>
<circle cx="633" cy="10" r="4" fill="#a8c4e4" stroke="#8aa8c8"/><rect x="633.5" y="12.5" width="8" height="6" fill="none" stroke="#5a7aa8"/><circle cx="633" cy="10" r="1.5" fill="#d8c880"/>
<path d="M647 12v-4q0-3 3-3t3 3" stroke="#c8b020" stroke-width="1.5" fill="none"/><rect x="651" y="10" width="8" height="9" rx="1" fill="#e8d868" stroke="#909020" stroke-width="0.6"/>
<rect x="662.5" y="8.5" width="9" height="10" fill="#fff" stroke="#000" stroke-width="1.3"/>
<text x="676" y="19" font-size="13" fill="#000" font-family="Liberation Sans">文字</text>
<path d="M879 13h7l-3.5 4z" fill="#000"/>
<path d="M894 9l8-4 8 4-8 4z" fill="#a8c4e4" stroke="#5a7aa0" stroke-width="0.6"/><path d="M894 12l8 4 8-4" stroke="#5a7aa0" fill="none"/><path d="M895 15l7 4 8-4-8-2z" fill="#e8d020" stroke="#a09010" stroke-width="0.6"/><path d="M895 20l4-4M896 16h3v3" stroke="#1a3a8a" stroke-width="1.2" fill="none"/>
<path d="M917 12l8-4 8 4-8 4z" fill="#a8c4e4" stroke="#5a7aa0" stroke-width="0.6"/><path d="M917 15l8 4 8-4M917 18l8 4 8-4" stroke="#5a7aa0" fill="none"/><path d="M921 11q1-6 7-5q4 2 2 7" stroke="#1a3a8a" stroke-width="2" fill="none"/><path d="M918 9l4 4 2-5z" fill="#1a3a8a"/>
<text x="957" y="19" font-size="16" fill="#202020" font-family="Liberation Sans">A</text><path d="M962 21l3-4 2 2z" fill="#202020"/><path d="M966 17l7-6" stroke="#d09048" stroke-width="2.2"/>
<rect x="979.5" y="2.5" width="60" height="20" fill="#ffffff" stroke="#a8a8a8"/>
<text x="982.5" y="16.5" font-size="11" letter-spacing="1.1" fill="#000" font-family="Liberation Serif">Standard</text></g>
</svg>
</body></html>
